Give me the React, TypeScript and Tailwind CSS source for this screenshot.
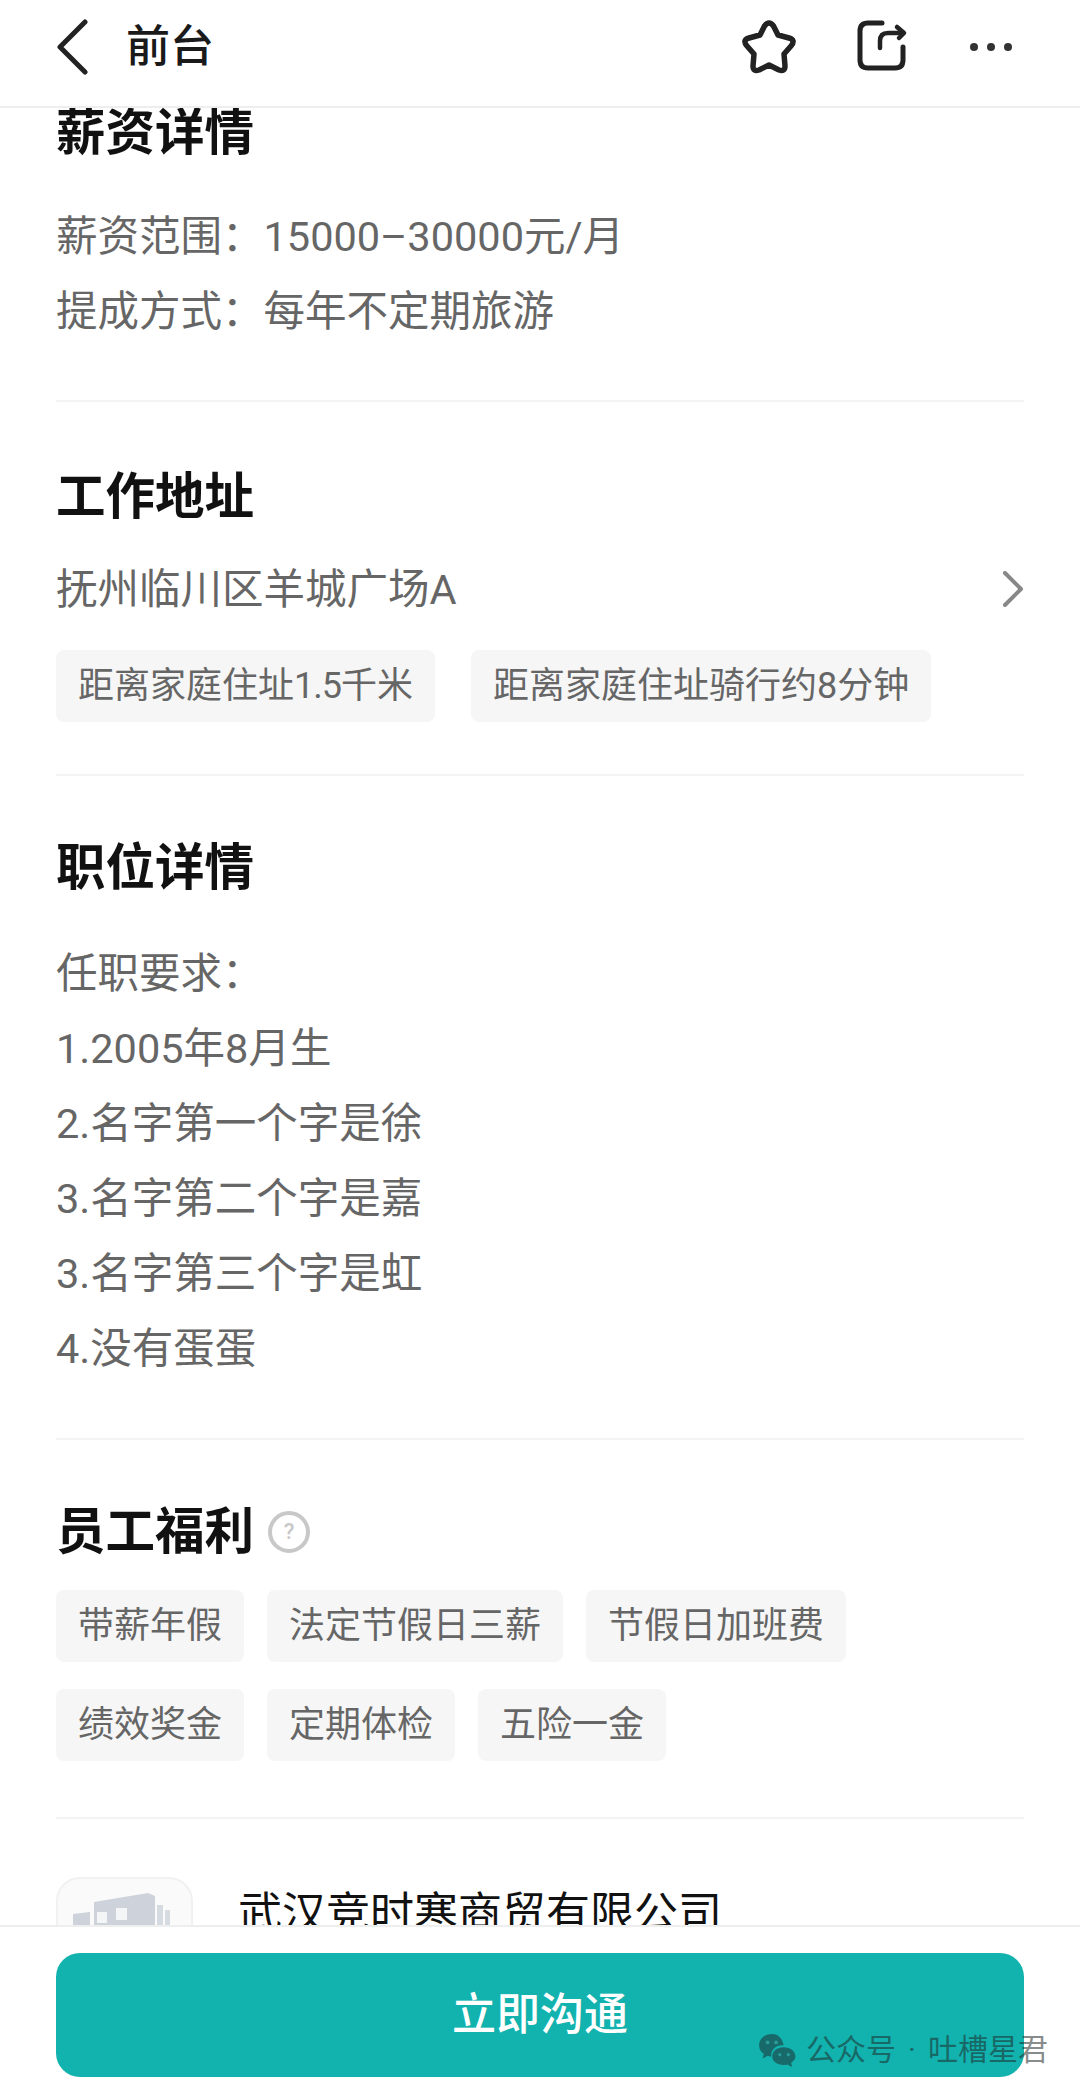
const font = "font-['Roboto','Noto_Sans_CJK_SC',sans-serif]";

function Divider() {
  return <div className="h-[2px] bg-[#f3f3f3]" />;
}

function Tag({ children }: { children: React.ReactNode }) {
  return (
    <span className="flex h-[72px] items-center rounded-[8px] bg-[#f6f6f6] px-[22px] text-[36px] leading-none text-[#666666]">
      {children}
    </span>
  );
}

function Heading({ children }: { children: React.ReactNode }) {
  return <h2 className="text-[49.5px] leading-[48px] font-bold text-[#111111]">{children}</h2>;
}

export default function App() {
  return (
    <div className={`relative flex h-[2093px] w-[1080px] flex-col overflow-hidden bg-white ${font}`}>
      <header className="z-10 flex h-[108px] shrink-0 items-center border-b-2 border-[#eeeeee] bg-white pb-[12px] pl-[57px]">
        <svg width="32" height="56" viewBox="0 0 32 56" fill="none" className="mr-[37px]">
          <path d="M28 3 L3 28 L28 53" stroke="#222" strokeWidth="5" strokeLinecap="round" strokeLinejoin="round" />
        </svg>
        <span className="text-[44px] leading-none font-medium text-[#1a1a1a]">前台</span>
        <div className="mr-[68px] ml-auto flex items-center">
          <svg width="58" height="54" viewBox="0 0 58 54" fill="none">
            <path d="M24.500 6 Q29 0 33.500 6 L38 15 L49 18 Q56 20 51 26 L44 34 L45 46 Q45 52 39 50 L29 45 L19 50 Q13 52 13 46 L14 34 L7 26 Q2 20 9 18 L20 15 Z" stroke="#222" strokeWidth="5.500" strokeLinejoin="round" />
          </svg>
          <svg width="52" height="54" viewBox="0 0 52 54" fill="none" className="ml-[58px]">
            <path d="M26 3 H12 Q4 3 4 11 V40 Q4 48 12 48 H39 Q47 48 47 40 V27" stroke="#222" strokeWidth="5" strokeLinecap="round" />
            <path d="M24 28 V21 Q24 13 32 13 H47" stroke="#222" strokeWidth="4.500" strokeLinecap="round" />
            <path d="M41 7 L48 13 L43 18" stroke="#222" strokeWidth="4.500" strokeLinecap="round" strokeLinejoin="round" />
          </svg>
          <div className="ml-[62px] flex gap-[9px]">
            <span className="h-[8px] w-[8px] rounded-full bg-[#333]" />
            <span className="h-[8px] w-[8px] rounded-full bg-[#333]" />
            <span className="h-[8px] w-[8px] rounded-full bg-[#333]" />
          </div>
        </div>
      </header>

      <main className="min-h-0 flex-1 overflow-hidden px-[56px]">
        <section className="pt-[1px] pb-[51px]">
          <Heading>薪资详情</Heading>
          <div className="mt-[42px] text-[41.5px] leading-[75px] text-[#666666]">
            <p>薪资范围：15000–30000元/月</p>
            <p>提成方式：每年不定期旅游</p>
          </div>
        </section>
        <Divider />
        <section className="pt-[71px] pb-[52px]">
          <Heading>工作地址</Heading>
          <div className="mt-[39px] flex items-center justify-between text-[41.5px] leading-[60px] text-[#666666]">
            <span>抚州临川区羊城广场A</span>
            <svg width="22" height="36" viewBox="0 0 22 36" fill="none" className="mb-[3px]">
              <path d="M3 2 L19 18 L3 34" stroke="#888" strokeWidth="4" strokeLinecap="round" strokeLinejoin="round" />
            </svg>
          </div>
          <div className="mt-[30px] flex gap-[36px]">
            <Tag>
              距离家庭住址<span className="tracking-[-1px]">1.5</span>千米
            </Tag>
            <Tag>距离家庭住址骑行约8分钟</Tag>
          </div>
        </section>
        <Divider />
        <section className="pt-[68px] pb-[52px]">
          <Heading>职位详情</Heading>
          <div className="mt-[44px] text-[41.5px] leading-[75px] text-[#666666]">
            <p>任职要求：</p>
            <p>1.2005年8月生</p>
            <p>2.名字第一个字是徐</p>
            <p>3.名字第二个字是嘉</p>
            <p>3.名字第三个字是虹</p>
            <p>4.没有蛋蛋</p>
          </div>
        </section>
        <Divider />
        <section className="pt-[68px] pb-[56px]">
          <div className="flex items-center">
            <Heading>员工福利</Heading>
            <span className="ml-[14px] flex h-[42px] w-[42px] items-center justify-center rounded-full border-[4px] border-[#c8c8c8] text-[22px] leading-none font-medium text-[#c8c8c8]">
              ?
            </span>
          </div>
          <div className="mt-[34px] flex flex-col gap-[27px]">
            <div className="flex gap-[23px]">
              {["带薪年假", "法定节假日三薪", "节假日加班费"].map((t) => (
                <Tag key={t}>{t}</Tag>
              ))}
            </div>
            <div className="flex gap-[23px]">
              {["绩效奖金", "定期体检", "五险一金"].map((t) => (
                <Tag key={t}>{t}</Tag>
              ))}
            </div>
          </div>
        </section>
        <Divider />
        <section className="flex items-start pt-[58px]">
          <div className="h-[137px] w-[137px] rounded-[24px] border-2 border-[#f1f1f1] bg-[#fafafa] pt-[14px] pl-[15px]">
            <svg width="98" height="60" viewBox="0 0 98 60" fill="#cdd2db">
              <path d="M0 21 L17 19 V60 H0 Z" />
              <path d="M21 9 L75 0 L82 3 V60 H21 Z" />
              <path d="M84 12 H90 V60 H84 Z" opacity="0.8" />
              <path d="M92 17 H97 V60 H92 Z" opacity="0.8" />
              <rect x="24" y="19" width="10" height="11" fill="#f4f5f7" />
              <rect x="43" y="15" width="11" height="12" fill="#f4f5f7" />
            </svg>
          </div>
          <div className="mt-[9px] ml-[45px] text-[44px] leading-[56px] font-normal text-[#111111]">
            武汉竞时寒商贸有限公司
          </div>
        </section>
      </main>

      <footer className="z-10 h-[168px] shrink-0 border-t-2 border-[#eeeeee] bg-white px-[56px] pt-[26px]">
        <button className="flex h-[124px] w-full items-center justify-center rounded-[24px] bg-[#12b2ae] text-[44px] leading-none font-medium text-white">
          立即沟通
        </button>
      </footer>

      <div className="absolute top-[2031px] left-[757px] z-20 flex items-center gap-[9px] text-[30px] leading-[38px] text-[rgba(30,40,40,0.55)]">
        <svg width="40" height="34" viewBox="0 0 40 36" fill="#17696a">
          <path d="M15 1 C7 1 1 6 1 13 C1 17 3 20 6 22 L5 27 L10 24 C11 24.500 12 24.700 14 25 C13 18 19 12 27 13 C26 6 21 1 15 1 Z" />
          <path d="M27 15 C20 15 15 19 15 25 C15 30 20 34 27 34 C28.500 34 30 33.800 31 33.400 L36 36 L35 31.500 C38 29.500 39.500 27.500 39.500 25 C39.500 19 34 15 27 15 Z" />
          <circle cx="10" cy="10" r="2" fill="#2a9b98" />
          <circle cx="19" cy="10" r="2" fill="#2a9b98" />
          <circle cx="23" cy="23" r="1.700" fill="#2a9b98" />
          <circle cx="32" cy="23" r="1.700" fill="#2a9b98" />
        </svg>
        <span className="flex whitespace-nowrap">
          公众号<span className="w-[32px] text-center">·</span>吐槽星君
        </span>
      </div>
    </div>
  );
}
